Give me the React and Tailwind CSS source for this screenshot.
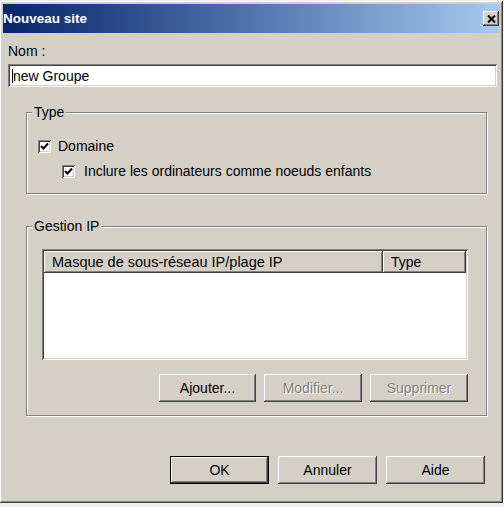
import React from 'react';

// Win2000-style bevels
const raised = 'shadow-[inset_-1px_-1px_#404040,inset_1px_1px_#ffffff,inset_-2px_-2px_#808080,inset_2px_2px_#d4d0c8]';
const sunken = 'shadow-[inset_1px_1px_#808080,inset_-1px_-1px_#ffffff,inset_2px_2px_#404040,inset_-2px_-2px_#d4d0c8]';

const CheckBox = () => (
  <span className={`w-[13px] h-[13px] bg-white ${sunken} flex items-center justify-center shrink-0`}>
    <svg width="9" height="9" viewBox="0 0 9 9">
      <path d="M1 4 L3.5 6.5 L8 1.5" stroke="#000" strokeWidth="2" fill="none" />
    </svg>
  </span>
);

const GroupBox = ({ label, className, children }) => (
  <div className={`relative border border-[#808080] shadow-[inset_1px_1px_#ffffff,1px_1px_#ffffff] ${className}`}>
    <span className="absolute -top-[9px] left-[5px] bg-[#d4d0c8] px-[2px] leading-[16px]">{label}</span>
    {children}
  </div>
);

const Button = ({ children, disabled, isDefault, className = '' }) => (
  <div
    className={`h-[28px] bg-[#d4d0c8] flex items-center justify-center ${
      isDefault
        ? 'border border-black shadow-[inset_-1px_-1px_#404040,inset_1px_1px_#ffffff,inset_-2px_-2px_#808080,inset_2px_2px_#d4d0c8]'
        : raised
    } ${disabled ? 'text-[#808080] [text-shadow:1px_1px_#ffffff]' : ''} ${className}`}
  >
    {children}
  </div>
);

export default function App() {
  return (
    <div className="w-[504px] h-[507px] bg-[#f0f0f0] pt-[1px] font-['Liberation_Sans',Arial,sans-serif] text-[14px] leading-[16px] text-black">
      <div className={`w-[503px] h-[502px] bg-[#d4d0c8] p-[3px] flex flex-col ${raised}`}>
        <div className="h-[29px] bg-gradient-to-r from-[#0a246a] to-[#a6caf0] flex items-center justify-between pl-0 pr-[1px]">
          <span className="text-white font-bold text-[13.5px]">Nouveau site</span>
          <div className={`w-[16px] h-[15px] bg-[#d4d0c8] ${raised} flex items-center justify-center`}>
            <svg width="9" height="8" viewBox="0 0 9 8">
              <path d="M1 0.5 L8 7.5 M8 0.5 L1 7.5" stroke="#000" strokeWidth="2" />
            </svg>
          </div>
        </div>

        <div className="flex flex-col pl-[5px] pr-[3px]">
          <div className="mt-[10px]">Nom :</div>
          <div className={`mt-[5px] h-[23px] bg-white ${sunken} flex items-center pl-[4px]`}>
            <span className="w-px h-[14px] bg-black" />
            <span>new Groupe</span>
          </div>

          <GroupBox label="Type" className="mt-[25px] mr-[10px] ml-[18px] h-[82px]">
            <div className="flex items-center gap-[7px] mt-[25px] ml-[11px]">
              <CheckBox />
              <span>Domaine</span>
            </div>
            <div className="flex items-center gap-[9px] mt-[9px] ml-[35px]">
              <CheckBox />
              <span>Inclure les ordinateurs comme noeuds enfants</span>
            </div>
          </GroupBox>

          <GroupBox label="Gestion IP" className="mt-[32px] mr-[10px] ml-[18px] h-[190px]">
            <div className="flex flex-col pl-[15px] pr-[18px] pt-[22px]">
              <div className={`h-[111px] bg-white ${sunken} p-[2px]`}>
                <div className="flex h-[22px]">
                  <div className={`w-[339px] bg-[#d4d0c8] ${raised} flex items-center pl-[8px] text-[14.5px]`}>
                    Masque de sous-réseau IP/plage IP
                  </div>
                  <div className={`flex-1 bg-[#d4d0c8] ${raised} flex items-center pl-[8px]`}>Type</div>
                </div>
              </div>
              <div className="flex justify-end gap-[8px] mt-[14px]">
                <Button className="w-[97px]">Ajouter...</Button>
                <Button className="w-[98px]" disabled>Modifier...</Button>
                <Button className="w-[98px]" disabled>Supprimer</Button>
              </div>
            </div>
          </GroupBox>

          <div className="flex justify-end gap-[9px] mt-[40px] mr-[12px]">
            <Button className="w-[99px]" isDefault>OK</Button>
            <Button className="w-[99px]">Annuler</Button>
            <Button className="w-[99px]">Aide</Button>
          </div>
        </div>
      </div>
    </div>
  );
}
